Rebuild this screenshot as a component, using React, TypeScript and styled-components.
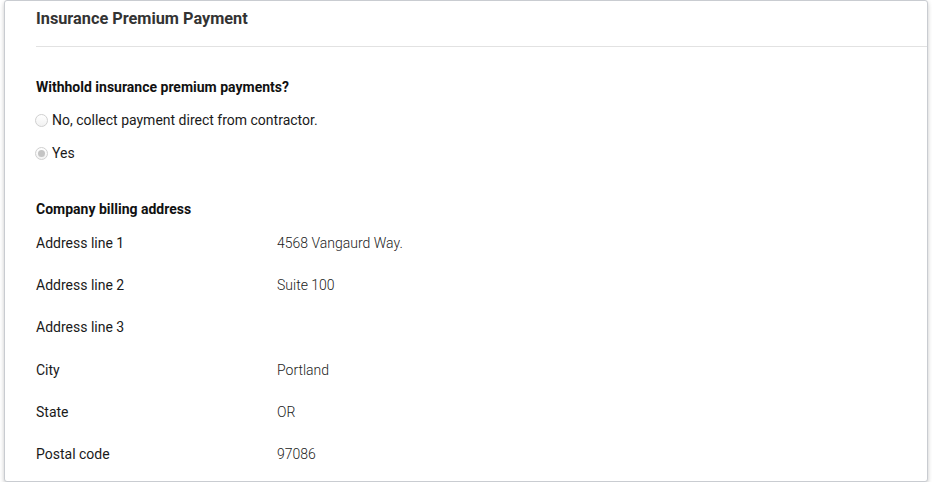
import React from 'react';
import styled, { createGlobalStyle } from 'styled-components';

type Field = { label: string; value: string };

const addressFields: Field[] = [
	{ label: 'Address line 1', value: '4568 Vangaurd Way.' },
	{ label: 'Address line 2', value: 'Suite 100' },
	{ label: 'Address line 3', value: '' },
	{ label: 'City', value: 'Portland' },
	{ label: 'State', value: 'OR' },
	{ label: 'Postal code', value: '97086' },
];

const paymentOptions = [
	{ id: 'direct', label: 'No, collect payment direct from contractor.', checked: false },
	{ id: 'withhold', label: 'Yes', checked: true },
];

function App() {
	return (
		<>
			<GlobalStyle />
			<Card>
				<Header>
					<Title>Insurance Premium Payment</Title>
				</Header>
				<Body>
					<Question>Withhold insurance premium payments?</Question>
					<Options>
						{paymentOptions.map((option) => (
							<Option key={option.id} htmlFor={option.id}>
								<Radio
									type="radio"
									id={option.id}
									name="withhold"
									defaultChecked={option.checked}
									disabled
								/>
								{option.label}
							</Option>
						))}
					</Options>
					<SectionTitle>Company billing address</SectionTitle>
					<Fields>
						{addressFields.map((field) => (
							<FieldRow key={field.label}>
								<FieldLabel>{field.label}</FieldLabel>
								<FieldValue>{field.value}</FieldValue>
							</FieldRow>
						))}
					</Fields>
				</Body>
			</Card>
		</>
	);
}

const GlobalStyle = createGlobalStyle`
	body {
		margin: 0;
		background: #ffffff;
		font-family: Roboto, "Liberation Sans", Arial, sans-serif;
		font-size: 14px;
		color: #1f1f1f;
	}
`;

const Card = styled.section`
	width: 924px;
	margin: 0 0 0 4px;
	box-sizing: border-box;
	background: #ffffff;
	border: 1px solid #c9ccd1;
	border-radius: 3px;
	box-shadow: 0 2px 4px rgba(0, 0, 0, 0.22);
`;

const Header = styled.header`
	margin-left: 31px;
	height: 46px;
	border-bottom: 1px solid #e2e2e2;
	display: flex;
	align-items: center;
	padding-bottom: 10px;
	box-sizing: border-box;
`;

const Title = styled.h1`
	margin: 0;
	font-size: 16.3px;
	font-weight: 700;
	color: #333333;
`;

const Body = styled.div`
	padding: 30px 31px 6px;
`;

const Question = styled.div`
	font-weight: 700;
	line-height: 20px;
	color: #111111;
`;

const Options = styled.div`
	display: flex;
	flex-direction: column;
	gap: 13px;
	margin: 13px 0 36px;
`;

const Option = styled.label`
	display: flex;
	align-items: center;
	gap: 4px;
	line-height: 20px;
	color: #1a1a1a;
`;

const Radio = styled.input`
	appearance: none;
	margin: 0 0 0 -1px;
	width: 13px;
	height: 13px;
	border-radius: 50%;
	border: 1px solid #d0d0d0;
	background: linear-gradient(#ffffff, #f2f2f2);
	box-sizing: border-box;
	display: grid;
	place-items: center;
	&:checked::after {
		content: '';
		width: 7px;
		height: 7px;
		border-radius: 50%;
		background: #c4c4c4;
	}
`;

const SectionTitle = styled.div`
	font-weight: 700;
	line-height: 20px;
	color: #111111;
`;

const Fields = styled.div`
	margin-top: 3px;
`;

const FieldRow = styled.div`
	display: grid;
	grid-template-columns: 241px 1fr;
	align-items: center;
	height: 42.2px;
`;

const FieldLabel = styled.div`
	color: #1a1a1a;
`;

const FieldValue = styled.div`
	font-weight: 300;
	color: #222222;
`;

export default App;
